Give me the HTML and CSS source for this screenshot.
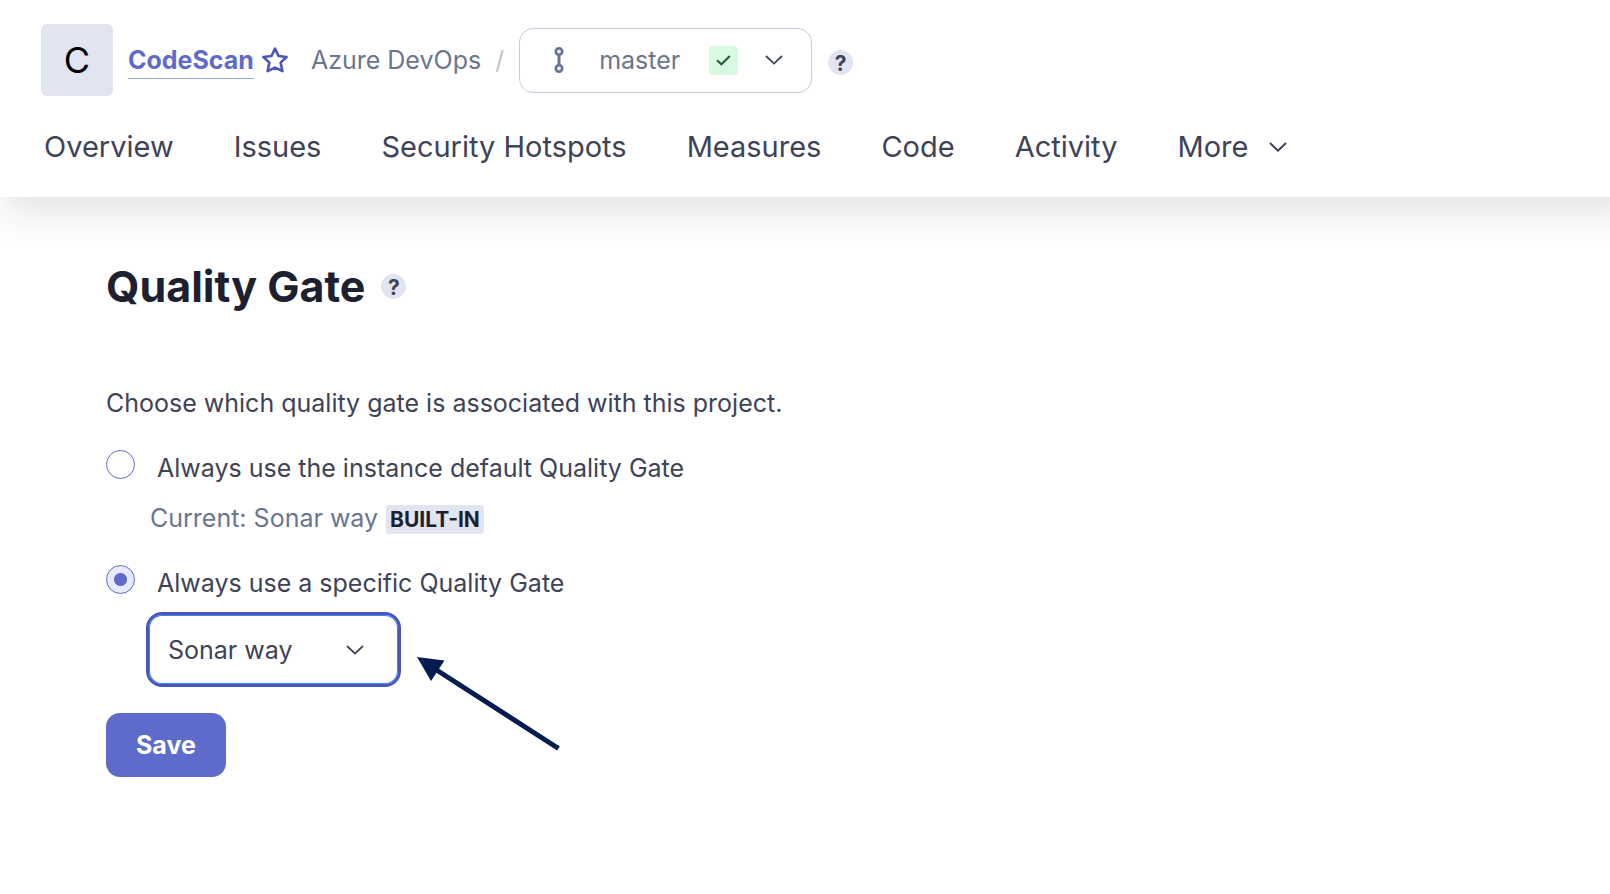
FILE: index.html
```html
<!DOCTYPE html>
<html lang="en">
<head>
<meta charset="utf-8">
<title>Quality Gate - CodeScan</title>
<link rel="stylesheet" href="styles.css">
</head>
<body>
<header class="header">
  <div class="project">
    <span class="avatar">C</span>
    <a class="project-link" href="#">CodeScan</a>
    <button class="star" type="button" aria-label="Favorite">
      <svg width="28" height="28" viewBox="0 0 28 28" fill="none" stroke="#4b56bb" stroke-width="2.6" stroke-linejoin="round"><path d="M14 2.6 L17.5 10 L25.6 11 L19.6 16.6 L21.4 25.2 L14 21.6 L6.6 25.2 L8.4 16.6 L2.4 11 L10.5 10 Z"/></svg>
    </button>
    <span class="binding">Azure DevOps</span>
    <span class="slash">/</span>
    <button class="branch" type="button">
      <svg class="branch-icon" width="10" height="26" viewBox="0 0 10 26" fill="none" stroke="#6a7590"><circle cx="5" cy="4.600" r="3.200" stroke-width="2.800"/><circle cx="5" cy="21.400" r="3.200" stroke-width="2.800"/><path d="M5 7.500V18.500" stroke-width="3"/></svg>
      <span>master</span>
      <span class="passed"><svg width="15" height="11" viewBox="0 0 15 11" fill="none" stroke="#215a3c" stroke-width="2"><path d="M1 5.200 L5.400 9.300 L13.800 1"/></svg></span>
      <svg class="chevron" width="18" height="10" viewBox="0 0 18 10" fill="none" stroke="currentColor" stroke-width="1.800"><path d="M1 1 L9 8.600 L17 1"/></svg>
    </button>
    <button class="help" type="button">?</button>
  </div>
  <nav class="tabs">
    <a href="#">Overview</a>
    <a href="#">Issues</a>
    <a href="#">Security Hotspots</a>
    <a href="#">Measures</a>
    <a href="#">Code</a>
    <a href="#">Activity</a>
    <a href="#">More<svg class="chevron" width="18" height="10" viewBox="0 0 18 10" fill="none" stroke="currentColor" stroke-width="2"><path d="M1 1 L9 8.600 L17 1"/></svg></a>
  </nav>
</header>
<main class="page">
  <div class="title">
    <h1>Quality Gate</h1>
    <button class="help" type="button">?</button>
  </div>
  <form class="form">
    <p class="intro">Choose which quality gate is associated with this project.</p>
    <div class="option">
      <input type="radio" name="gate" id="gate-default">
      <label for="gate-default">Always use the instance default Quality Gate</label>
    </div>
    <p class="current">Current: Sonar way <span class="badge">BUILT-IN</span></p>
    <div class="option">
      <input type="radio" name="gate" id="gate-specific" checked>
      <label for="gate-specific">Always use a specific Quality Gate</label>
    </div>
    <div class="picker">
      <select class="select" aria-label="Quality Gate"><option>Sonar way</option></select>
      <svg class="chevron picker-chevron" width="18" height="10" viewBox="0 0 18 10" fill="none" stroke="currentColor" stroke-width="1.800"><path d="M1 1 L9 8.600 L17 1"/></svg>
      <svg class="arrow" width="144" height="94" viewBox="0 0 144 94" fill="#051c50"><path d="M0 0 L27.500 3.500 L14 24 Z"/><path d="M18 12 L141.500 91.500" stroke="#051c50" stroke-width="5"/></svg>
    </div>
    <button class="save" type="button">Save</button>
  </form>
</main>
</body>
</html>
```

FILE: styles.css
```css
* {
  box-sizing: border-box;
}

body {
  margin: 0;
  background: #fff;
  color: #3e4357;
  font: 25px/32px Inter, "Liberation Sans", sans-serif;
  overflow-x: hidden;
}

button,
select {
  font: inherit;
  cursor: pointer;
}

a {
  color: inherit;
  text-decoration: none;
}

h1,
p {
  margin: 0;
}

svg {
  display: block;
  flex: none;
}

.header {
  padding: 24px 41px 31px;
  box-shadow: 15px 6px 36px 9px rgba(29, 30, 36, 0.13);
}

.project {
  display: flex;
  align-items: center;
}

.avatar {
  display: flex;
  align-items: center;
  justify-content: center;
  width: 72px;
  height: 72px;
  margin-right: 15px;
  border-radius: 6px;
  background: #e1e5f2;
  color: #000;
  font-size: 36px;
}

.project-link {
  margin-top: 3px;
  padding-bottom: 2px;
  border-bottom: 1px solid #9da7e8;
  color: #5f6bca;
  font-weight: 700;
}

.star {
  margin: 0 22px 0 7px;
  padding: 0;
  border: 0;
  background: none;
}

.binding {
  color: #6a7590;
}

.slash {
  margin: 0 15px 0 14px;
  color: #c4c4c4;
}

.branch {
  display: flex;
  align-items: center;
  height: 65px;
  padding: 0 28px 0 34px;
  border: 1px solid #c5cddf;
  border-radius: 14px;
  background: #fff;
  color: #6a7590;
}

.branch-icon {
  margin-right: 35px;
}

.passed {
  display: flex;
  align-items: center;
  justify-content: center;
  width: 29px;
  height: 29px;
  margin: 0 27px 0 29px;
  border-radius: 4px;
  background: #d9f9e1;
}

.chevron {
  color: #3e4357;
}

.help {
  width: 25px;
  height: 25px;
  padding: 0;
  border: 0;
  border-radius: 50%;
  background: #e1e5f2;
  color: #3e4357;
  font-size: 21px;
  line-height: 27px;
  font-weight: 700;
}

.project .help {
  margin: 5px 0 0 16px;
}

.tabs {
  display: flex;
  gap: 60px;
  margin: 32px 0 0 3px;
  font-size: 29px;
  line-height: 38px;
}

.tabs a {
  display: flex;
  align-items: center;
  gap: 21px;
}

.page {
  padding: 62px 106px;
}

.title {
  display: flex;
  align-items: center;
  gap: 16px;
}

h1 {
  color: #1d212f;
  font-size: 43px;
  line-height: 54px;
  font-weight: 700;
}

.form {
  padding-top: 74px;
}

.option {
  display: flex;
  align-items: flex-start;
  margin-top: 31px;
}

.option input {
  appearance: none;
  width: 29px;
  height: 29px;
  margin: 0 22px 0 0;
  border: 1px solid #5f6bca;
  border-radius: 50%;
  background: #fff;
}

.option label {
  padding-top: 2px;
}

.option input:checked {
  background: radial-gradient(circle, #5f6bca 6px, #e8ebff 7px);
}

.current {
  display: flex;
  align-items: center;
  gap: 8px;
  margin: 18px 0 0 44px;
  color: #6a7590;
}

.badge {
  margin-top: 2px;
  padding: 0 4px;
  border-radius: 3px;
  background: #e1e5f2;
  color: #1d212f;
  font-size: 21px;
  line-height: 29px;
  font-weight: 700;
}

.picker {
  position: relative;
  width: 255px;
  margin: 13px 0 26px 40px;
}

.select {
  appearance: none;
  display: block;
  width: 100%;
  height: 75px;
  padding: 0 19px;
  border: 3px solid #4b56bb;
  border-radius: 16px;
  outline: 0;
  background: #fff;
  box-shadow: inset 0 0 0 1px #3b82f6;
  color: #3e4357;
}

.picker-chevron {
  position: absolute;
  top: 33px;
  right: 37px;
  pointer-events: none;
}

.arrow {
  position: absolute;
  top: 45px;
  left: 271px;
  pointer-events: none;
}

.save {
  height: 64px;
  padding: 0 30px;
  border: 0;
  border-radius: 14px;
  background: #5f6bca;
  color: #fff;
  font-weight: 700;
}
```
